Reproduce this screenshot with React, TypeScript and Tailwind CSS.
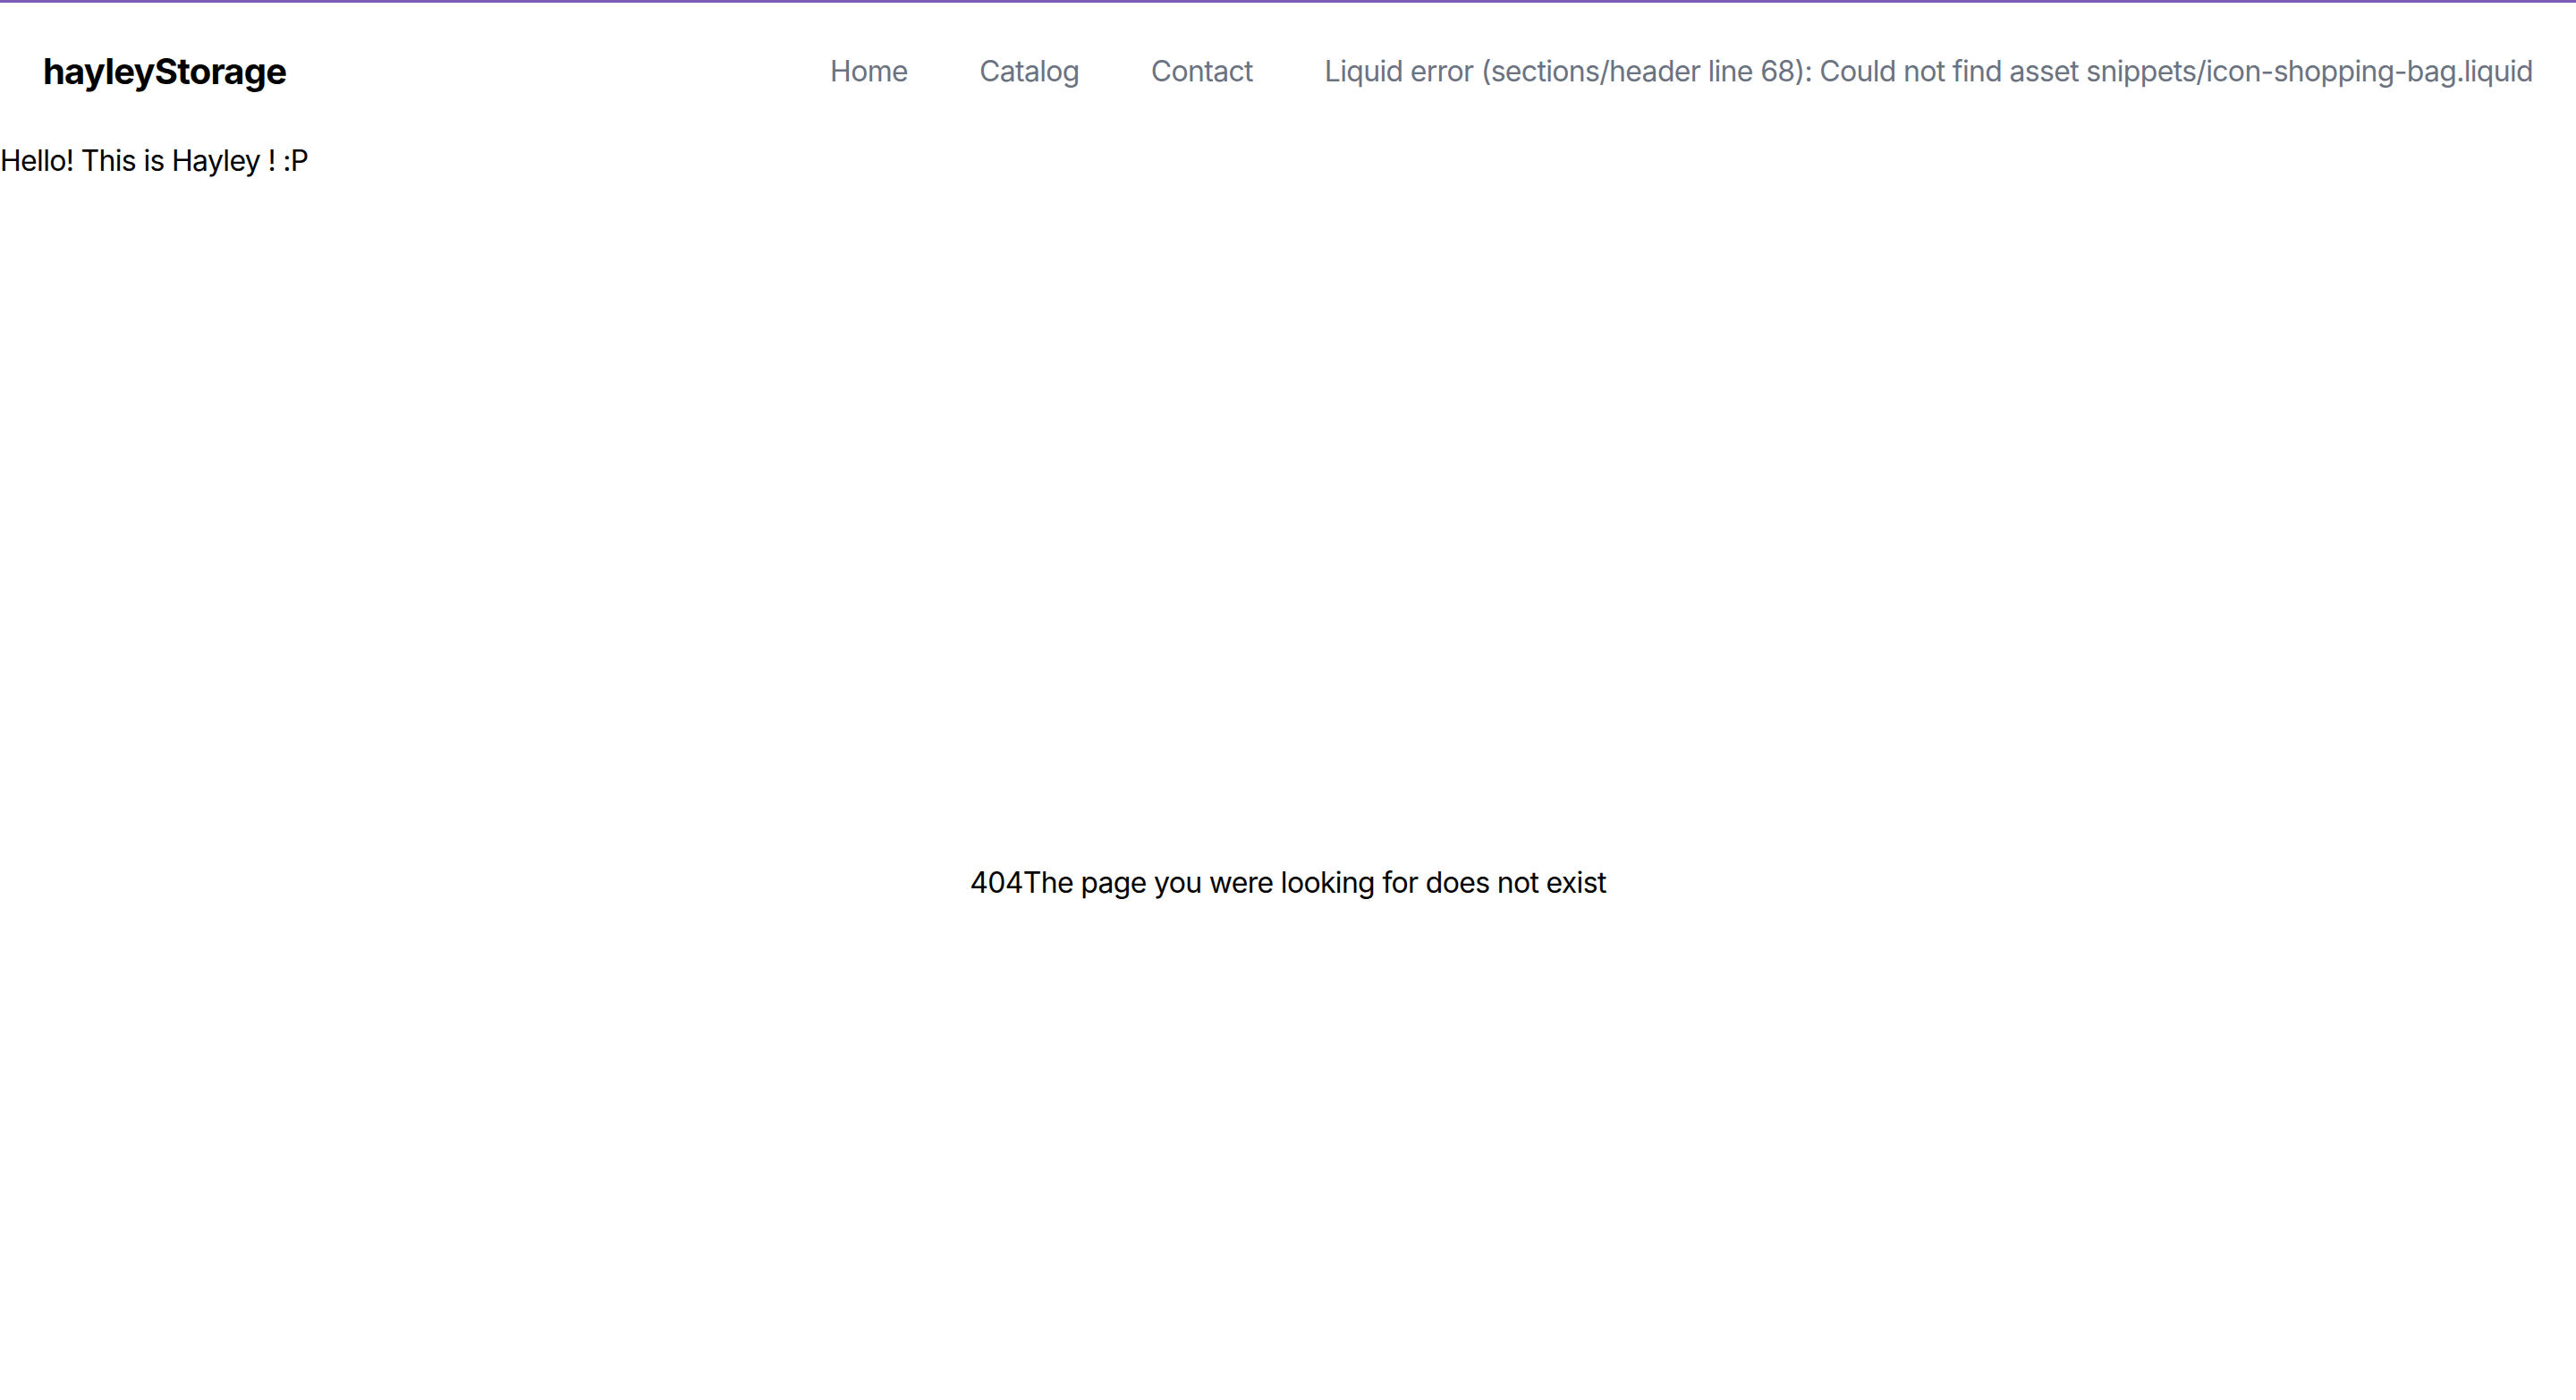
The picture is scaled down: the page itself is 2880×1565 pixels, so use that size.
import React from 'react';

const navLinks = [
  'Home',
  'Catalog',
  'Contact',
  'Liquid error (sections/header line 68): Could not find asset snippets/icon-shopping-bag.liquid',
];

export default function App() {
  return (
    <div className="min-h-screen bg-white text-black font-['Inter',sans-serif] text-[32px] leading-[48px] tracking-[-0.68px]">
      <header className="h-[156px] border-t-[3px] border-[#7d5cb8] px-12 flex items-center justify-between">
        <a className="text-[40px] leading-[56px] font-bold tracking-[-0.8px]">hayleyStorage</a>
        <nav className="flex items-center gap-20">
          {navLinks.map((link) => (
            <a key={link} className="text-[#6b7280]">
              {link}
            </a>
          ))}
        </nav>
      </header>
      <p>Hello! This is Hayley ! :P</p>
      <main className="min-h-screen flex items-center justify-center">
        <p>
          <span>404</span>
          <span>The page you were looking for does not exist</span>
        </p>
      </main>
    </div>
  );
}
